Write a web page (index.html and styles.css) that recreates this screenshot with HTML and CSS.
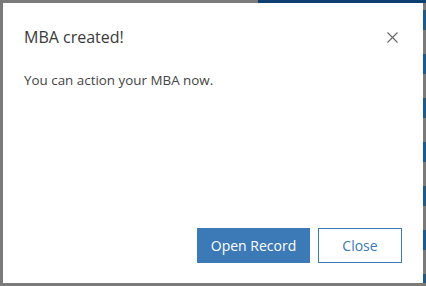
FILE: index.html
```html
<!DOCTYPE html>
<html lang="en">

<head>
  <meta charset="UTF-8" />
  <meta name="viewport" content="width=device-width, initial-scale=1.0" />
  <title>MBA created</title>
  <link rel="stylesheet" href="styles.css">
</head>

<body>
  <div class="dialog">
    <div class="dialog-header">
      <h1 class="dialog-title">MBA created!</h1>
      <button class="dialog-close" type="button" aria-label="Close">
        <svg width="11" height="11" viewBox="0 0 11 11">
          <path d="M0.5 0.5 L10.5 10.5 M10.5 0.5 L0.5 10.5" stroke="#666" stroke-width="1.1" fill="none" />
        </svg>
      </button>
    </div>
    <p class="dialog-body">You can action your MBA now.</p>
    <div class="dialog-footer">
      <button class="btn btn-primary" type="button">Open Record</button>
      <button class="btn btn-secondary" type="button">Close</button>
    </div>
  </div>
</body>

</html>
```

FILE: styles.css
```css
html,
body {
  margin: 0;
  height: 100%;
}

body {
  box-sizing: border-box;
  padding: 3px 3px 3px 3px;
  background-color: #7a7a7a;
  background-image:
    linear-gradient(#0d3f70, #0d3f70),
    repeating-linear-gradient(#7a7a7a 0 10px, #1f5a8a 10px 30px, #7a7a7a 30px 44px);
  background-size: 168px 3px, 3px 283px;
  background-position: 258px 0, 423px 0;
  background-repeat: no-repeat;
  font-family: "Segoe UI", "Open Sans", sans-serif;
}

.dialog {
  height: 280px;
  background: #fff;
  display: flex;
  flex-direction: column;
  box-sizing: border-box;
  padding: 0 21px 20px 21px;
}

.dialog-header {
  display: flex;
  align-items: center;
  justify-content: space-between;
  padding-top: 22px;
}

.dialog-title {
  margin: 0;
  font-size: 16px;
  font-weight: 400;
  line-height: 24px;
  color: #3a3a3a;
}

.dialog-close {
  border: none;
  background: none;
  padding: 0;
  margin-right: 4px;
  display: flex;
}

.dialog-body {
  margin: 21px 0 0 0;
  font-size: 13.4px;
  line-height: 20px;
  color: #444;
  flex: 1;
}

.dialog-footer {
  display: flex;
  justify-content: flex-end;
  gap: 8px;
}

.btn {
  height: 35px;
  font-family: inherit;
  font-size: 14px;
  box-sizing: border-box;
  border: 1px solid #3b79b7;
}

.btn-primary {
  width: 113px;
  background: #3b79b7;
  color: #fff;
}

.btn-secondary {
  width: 84px;
  background: #fff;
  color: #3b79b7;
}
```
